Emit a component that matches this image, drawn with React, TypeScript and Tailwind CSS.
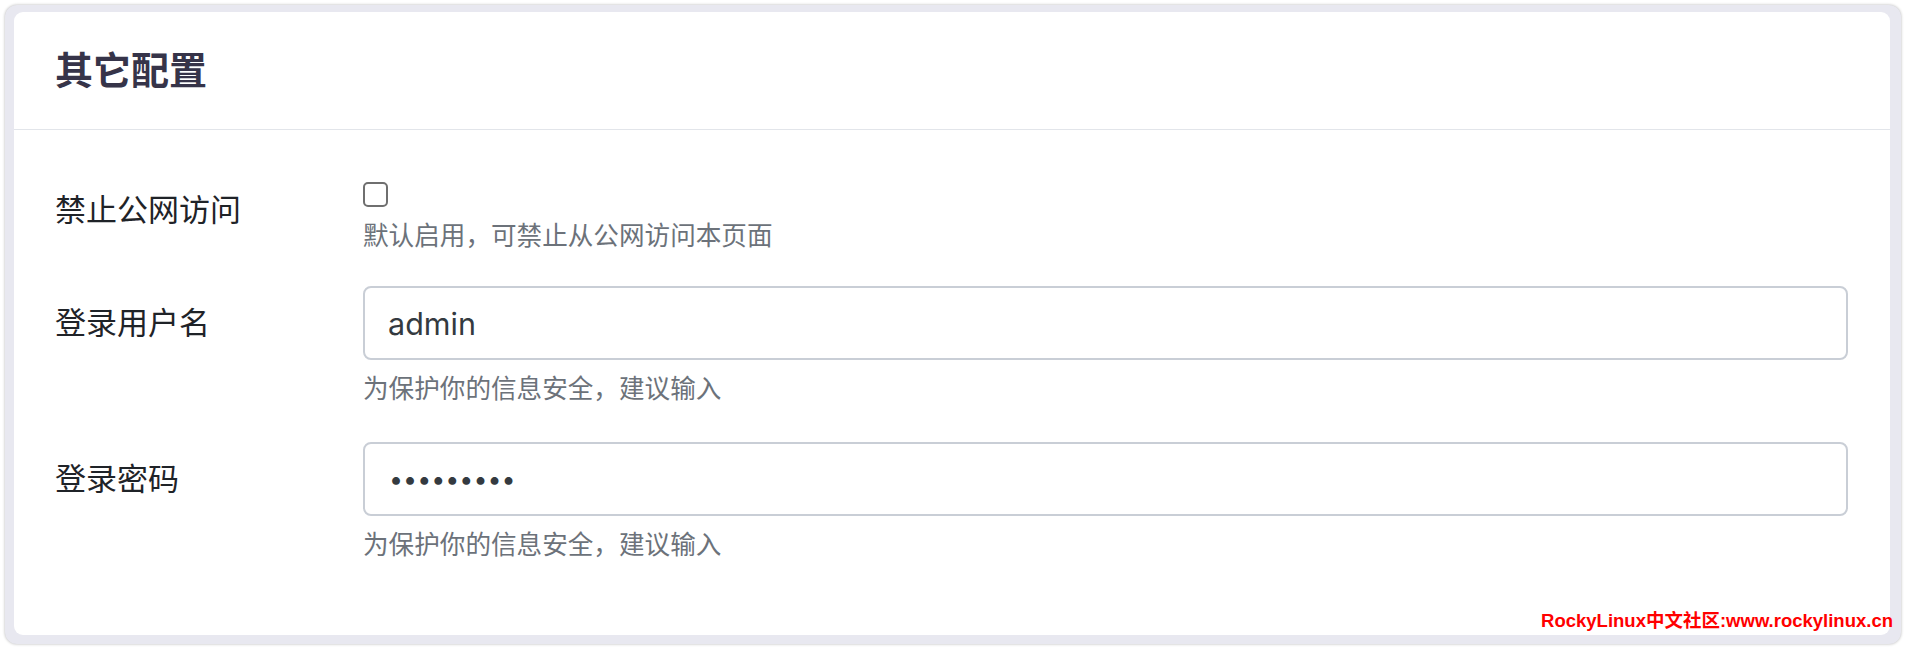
import { useState } from "react";

const fontStack = "font-['Inter','Noto_Sans_CJK_SC',sans-serif]";

function HelpText({ children }: { children: React.ReactNode }) {
  return <p className="text-[25.6px] leading-[36px] text-[#6c727a]">{children}</p>;
}

export default function App() {
  const [user, setUser] = useState("admin");
  const [pass, setPass] = useState("123456789");

  return (
    <div className={`h-[650px] bg-white p-[5px] ${fontStack}`}>
      {/* outer frame */}
      <div className="relative h-[639px] rounded-[12px] bg-[#e8e8f0] pl-[9px] pt-[7px] pr-[11px] pb-[9px] shadow-[0_0_3px_rgba(0,0,0,0.3)]">
        <div className="flex h-full flex-col rounded-[9px] bg-white">
          {/* Header */}
          <div className="flex h-[118px] items-center border-b border-[#e2e5ea] px-[41px]">
            <h2 className="text-[38px] font-bold text-[#363449]">其它配置</h2>
          </div>

          {/* Form */}
          <div className="flex flex-col pl-[41px] pr-[42px] pt-[52px]">
            {/* row 1 */}
            <div className="flex items-start">
              <label className="mt-[6px] w-[308px] shrink-0 text-[31px] leading-[44px] text-[#1f2328]">
                禁止公网访问
              </label>
              <div className="flex flex-1 flex-col">
                <input
                  type="checkbox"
                  className="h-[25px] w-[25px] appearance-none rounded-[5px] border-2 border-[#6f6f6f] bg-white"
                />
                <div className="mt-[11px]">
                  <HelpText>默认启用，可禁止从公网访问本页面</HelpText>
                </div>
              </div>
            </div>

            {/* row 2 */}
            <div className="mt-[32px] flex items-start">
              <label className="flex h-[74px] w-[308px] shrink-0 items-center text-[31px] text-[#1f2328]">
                登录用户名
              </label>
              <div className="flex flex-1 flex-col">
                <input
                  type="text"
                  value={user}
                  onChange={(e) => setUser(e.target.value)}
                  className="h-[74px] w-full rounded-[8px] border-2 border-[#c9ced6] bg-white px-[23px] text-[30.5px] text-[#343a40] outline-none"
                />
                <div className="mt-[11px]">
                  <HelpText>为保护你的信息安全，建议输入</HelpText>
                </div>
              </div>
            </div>

            {/* row 3 */}
            <div className="mt-[35px] flex items-start">
              <label className="flex h-[74px] w-[308px] shrink-0 items-center text-[31px] text-[#1f2328]">
                登录密码
              </label>
              <div className="flex flex-1 flex-col">
                <input
                  type="password"
                  value={pass}
                  onChange={(e) => setPass(e.target.value)}
                  className="h-[74px] w-full rounded-[8px] border-2 border-[#c9ced6] bg-white px-[24px] text-[25px] text-[#343a40] outline-none"
                />
                <div className="mt-[11px]">
                  <HelpText>为保护你的信息安全，建议输入</HelpText>
                </div>
              </div>
            </div>
          </div>
        </div>

        {/* watermark */}
        <span className="absolute bottom-[13px] right-[8px] font-['Liberation_Sans','Noto_Sans_CJK_SC',sans-serif] text-[18.5px] leading-[20px] font-bold text-[#ff0000]">
          RockyLinux中文社区:www.rockylinux.cn
        </span>
      </div>
    </div>
  );
}
